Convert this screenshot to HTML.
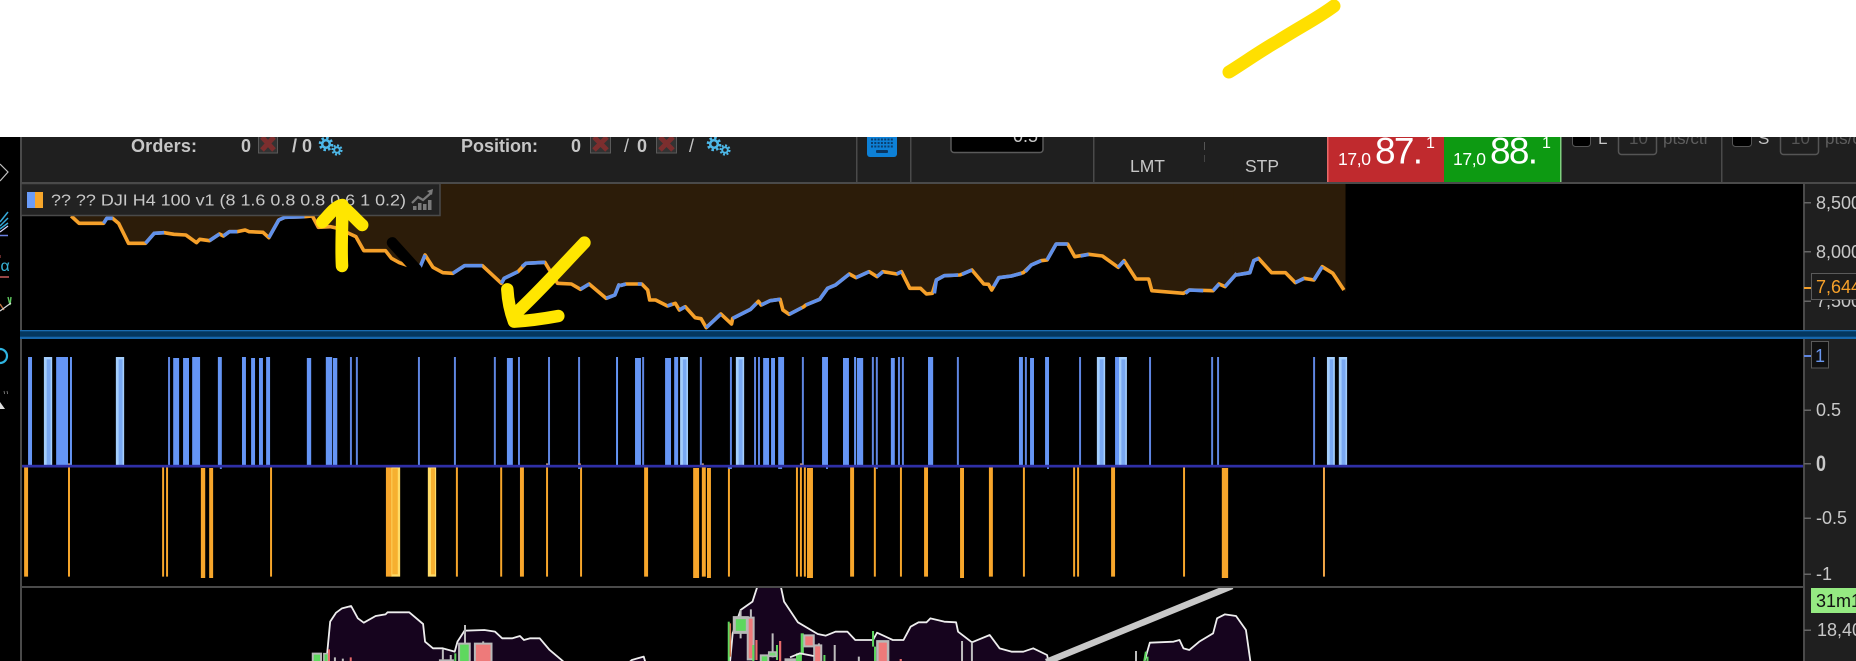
<!DOCTYPE html>
<html><head><meta charset="utf-8"><title>Chart</title>
<style>
html,body{margin:0;padding:0;background:#fff;width:1856px;height:661px;overflow:hidden}
svg{display:block;position:absolute;left:0;top:0}
text{font-family:"Liberation Sans",Arial,sans-serif}
.ns *{vector-effect:non-scaling-stroke}
</style></head><body>
<svg width="1856" height="661" viewBox="0 0 1856 661" xmlns="http://www.w3.org/2000/svg">
<defs>
<clipPath id="top"><rect x="0" y="137" width="1856" height="524"/></clipPath>
<clipPath id="pane"><rect x="21" y="588" width="1782" height="73"/></clipPath>
<clipPath id="pane1"><rect x="21" y="184" width="1782" height="146"/></clipPath>
</defs>
<rect width="1856" height="661" fill="#fff"/>
<rect y="137" width="1856" height="524" fill="#000"/>
<!-- header -->
<rect x="20" y="137" width="1836" height="45" fill="#1f1f1f"/>
<rect x="20" y="137" width="2" height="524" fill="#4a4a4a"/>
<rect x="20" y="182" width="1836" height="2" fill="#4a4a4a"/>
<rect x="856" y="137" width="1.5" height="45" fill="#4a4a4a"/>
<rect x="910" y="137" width="1.5" height="45" fill="#4a4a4a"/>
<rect x="1093" y="137" width="1.5" height="45" fill="#4a4a4a"/>
<rect x="1721" y="137" width="1.5" height="45" fill="#4a4a4a"/>
<rect x="1204" y="142" width="1" height="8" fill="#555"/><rect x="1204" y="155" width="1" height="7" fill="#444"/>

<g clip-path="url(#top)">
<text x="131" y="152" font-size="18" font-weight="bold" fill="#c6c6c6" textLength="66">Orders:</text>
<text x="241" y="152" font-size="18" font-weight="bold" fill="#c6c6c6">0</text>
<rect x="258.500" y="134" width="19" height="19" fill="#333" stroke="#5a5a5a"/>
<path d="M262 137l12 13M274 137l-12 13" stroke="#7c2e2e" stroke-width="5"/>
<text x="292" y="152" font-size="18" font-weight="bold" fill="#c6c6c6">/ 0</text>
<g fill="none" stroke="#4db8e8">
<circle cx="326" cy="144" r="3.800" stroke-width="2.500"/><circle cx="326" cy="144" r="6" stroke-width="2.600" stroke-dasharray="2.500 2.200"/>
<circle cx="337" cy="150" r="2.800" stroke-width="2"/><circle cx="337" cy="150" r="4.600" stroke-width="2" stroke-dasharray="2 1.600"/>
</g>
<text x="461" y="152" font-size="18" font-weight="bold" fill="#c6c6c6" textLength="77">Position:</text>
<text x="571" y="152" font-size="18" font-weight="bold" fill="#c6c6c6">0</text>
<rect x="590.500" y="134" width="20" height="19" fill="#333" stroke="#5a5a5a"/>
<path d="M594 137l13 13M607 137l-13 13" stroke="#7c2e2e" stroke-width="5"/>
<text x="624" y="152" font-size="18" fill="#c6c6c6">/</text>
<text x="637" y="152" font-size="18" font-weight="bold" fill="#c6c6c6">0</text>
<rect x="656.500" y="134" width="20" height="19" fill="#333" stroke="#5a5a5a"/>
<path d="M660 137l13 13M673 137l-13 13" stroke="#7c2e2e" stroke-width="5"/>
<text x="689" y="152" font-size="18" fill="#c6c6c6">/</text>
<g fill="none" stroke="#4db8e8">
<circle cx="714" cy="144" r="3.800" stroke-width="2.500"/><circle cx="714" cy="144" r="6" stroke-width="2.600" stroke-dasharray="2.500 2.200"/>
<circle cx="725" cy="150" r="2.800" stroke-width="2"/><circle cx="725" cy="150" r="4.600" stroke-width="2" stroke-dasharray="2 1.600"/>
</g>
<!-- keyboard -->
<rect x="867" y="130" width="30" height="27" rx="3" fill="#0d80d6"/>
<path d="M871 139.500h22M871 143h22M871 146.500h22" stroke="#0a3f70" stroke-width="2" stroke-dasharray="2 1.300"/>
<rect x="876" y="150" width="12" height="3" rx="1" fill="#0a3560"/>
<!-- input -->
<rect x="951" y="120" width="92" height="32.500" rx="3" fill="#000" stroke="#5a5a5a" stroke-width="1.500"/>
<text x="1013" y="142" font-size="18" fill="#c8c8c8">0.5</text>
<text x="1130" y="172" font-size="17.500" fill="#c6c6c6">LMT</text>
<text x="1245" y="172" font-size="17.500" fill="#c6c6c6">STP</text>
<!-- bid/ask -->
<rect x="1327" y="137" width="117" height="45" fill="#c02a2e"/>
<rect x="1327" y="137" width="1.500" height="45" fill="#e86a6a"/>
<rect x="1444" y="137" width="117" height="45" fill="#0d9a12"/>
<rect x="1560" y="137" width="1.500" height="45" fill="#7ed07e"/>
<text x="1338" y="165" font-size="17.500" fill="#fff" textLength="33">17,0</text>
<text x="1375" y="163.500" font-size="37" fill="#fff" textLength="48">87.</text>
<text x="1426" y="148" font-size="16" fill="#fff">1</text>
<text x="1453" y="165" font-size="17.500" fill="#fff" textLength="33">17,0</text>
<text x="1490" y="163.500" font-size="37" fill="#fff" textLength="48">88.</text>
<text x="1542" y="148" font-size="16" fill="#fff">1</text>
<!-- checks -->
<rect x="1572.500" y="128" width="18" height="18.500" rx="3" fill="#000" stroke="#555"/>
<text x="1598" y="144" font-size="17" fill="#c6c6c6">L</text>
<rect x="1618.500" y="125" width="38" height="29.500" rx="3" fill="none" stroke="#555" stroke-width="1.500"/>
<text x="1629" y="144" font-size="17" fill="#555">10</text>
<text x="1663" y="144" font-size="17" fill="#5e5e5e">pts/ctr</text>
<rect x="1732.500" y="128" width="19" height="18.500" rx="3" fill="#000" stroke="#555"/>
<text x="1758" y="144" font-size="17" fill="#c6c6c6">S</text>
<rect x="1780.500" y="125" width="38" height="29.500" rx="3" fill="none" stroke="#555" stroke-width="1.500"/>
<text x="1791" y="144" font-size="17" fill="#555">10</text>
<text x="1825" y="144" font-size="17" fill="#5e5e5e">pts/ctr</text>
</g>

<!-- price chart area -->
<g clip-path="url(#pane1)">
<g transform="translate(0,130) scale(.39541,.33333)">
<path fill="#2c1c09" d="M180 258L200 280H262L270 265H285L300 280L325 340H368L390 310L415 308L440 313L470 315L497 338L505 328L530 332L555 312L565 318L580 305H600L620 300L630 305L665 307L680 323L705 270L720 262L770 260L790 258L805 292L835 290L855 295L900 320L920 362H975L990 385L1010 398L1060 418L1075 375L1095 412L1120 428L1145 430L1175 407H1220L1268 460L1275 445L1310 425L1330 400L1378 397L1410 460L1445 462L1468 478L1490 462L1533 505L1555 495L1565 465L1568 467L1575 467V162H180Z"/>
</g>
<g transform="translate(620,130) scale(.39541,.33333)">
<path fill="#2c1c09" d="M0 467L15 462H55L70 480L75 510H90L120 528L140 520L150 540L165 530L190 563L205 566L218 593L255 552L282 582L285 565L330 538L350 514L357 525L380 512L405 508L412 540L428 553L465 530L470 525L505 508L525 475L545 465L580 432L597 443L630 425L650 440L665 425L700 432L712 425L733 475H760L775 492L790 490L800 450L820 437L860 435L890 420L920 462L932 463L940 480L958 443L990 438L1020 428L1040 405L1065 392L1080 390L1103 342H1132L1150 380L1185 373L1220 378L1260 412L1275 392L1305 447H1337L1345 482L1425 490L1440 480L1500 482L1515 462L1530 470L1560 430L1565 430V162H0Z"/>
</g>
<g transform="translate(1236,130) scale(.39541,.33333)">
<path fill="#2c1c09" d="M-6 436L0 435L35 428L45 392L57 385L90 428H125L150 458L172 445L197 450L218 410L245 430L277 486V162H-6Z"/>
</g>
<g class="ns" fill="none" stroke-width="3.600" stroke-linejoin="round" stroke-linecap="butt">
<g transform="translate(0,130) scale(.39541,.33333)">
<path stroke="#f5a02a" d="M180 258L200 280H262L270 265H285L300 280L325 340H368L390 310L415 308L440 313L470 315L497 338L505 328L530 332L555 312L565 318L580 305H600L620 300L630 305L665 307L680 323L705 270L720 262L770 260L790 258L805 292L835 290L855 295L900 320L920 362H975L990 385L1010 398L1060 418L1075 375L1095 412L1120 428L1145 430L1175 407H1220L1268 460L1275 445L1310 425L1330 400L1378 397L1410 460L1445 462L1468 478L1490 462L1533 505L1555 495L1565 465L1568 467"/>
<path stroke="#6090ea" d="M262 280L270 265H285M368 340L390 310L415 308M530 332L555 312M565 318L580 305H600M680 323L705 270L720 262L770 260M1060 418L1075 375M1145 430L1175 407H1220M1268 460L1275 445L1310 425M1320 410L1330 400L1378 397M1468 478L1490 462M1533 505L1555 495L1565 465L1568 467"/>
<path stroke="#000" stroke-width="11" stroke-linecap="round" d="M992 338L1053 418"/>
</g>
<g transform="translate(620,130) scale(.39541,.33333)">
<path stroke="#f5a02a" d="M0 467L15 462H55L70 480L75 510H90L120 528L140 520L150 540L165 530L190 563L205 566L218 593L255 552L282 582L285 565L330 538L350 514L357 525L380 512L405 508L412 540L428 553L465 530L470 525L505 508L525 475L545 465L580 432L597 443L630 425L650 440L665 425L700 432L712 425L733 475H760L775 492L790 490L800 450L820 437L860 435L890 420L920 462L932 463L940 480L958 443L990 438L1020 428L1040 405L1065 392L1080 390L1103 342H1132L1150 380L1185 373L1220 378L1260 412L1275 392L1305 447H1337L1345 482L1425 490L1440 480L1500 482L1515 462L1530 470L1560 430"/>
<path stroke="#6090ea" d="M0 467L15 462M45 462H55M120 528L132 522M150 540L165 530M218 593L255 552M285 565L330 538L345 520M357 525L380 512L405 508M428 553L460 533M470 525L505 508L525 475L545 465L580 432M597 443L630 425M650 440L665 425M700 432L712 425M795 490L800 450L820 437L855 435M865 433L890 420M945 470L958 443L990 438L1015 430M1025 425L1040 405L1065 392M1080 390L1103 342H1132M1165 378L1185 373M1260 412L1275 392M1430 490L1440 480L1475 482M1500 482L1515 462M1530 470L1560 430"/>
</g>
<g transform="translate(1236,130) scale(.39541,.33333)">
<path stroke="#f5a02a" d="M0 435L35 428L45 392L57 385L90 428H125L150 458L172 445L197 450L218 410L245 430L273 480"/>
<path stroke="#6090ea" d="M0 435L35 428L45 392L57 385M150 458L172 445M197 450L218 410"/>
</g>
</g>
</g>

<!-- legend -->
<rect x="21" y="183.500" width="419" height="32" fill="#222" stroke="#4a4a4a" stroke-width="1.500"/>
<rect x="27" y="192" width="8" height="16" fill="#6a9cf8"/>
<rect x="35" y="192" width="8" height="16" fill="#f7a62b"/>
<text x="51" y="205.500" font-size="16" fill="#c8c8c8" textLength="355" lengthAdjust="spacingAndGlyphs">?? ?? DJI H4 100 v1 (8 1.6 0.8 0.8 0.6 1 0.2)</text>
<g stroke="#7a7a7a" stroke-width="2.200" fill="none"><path d="M412 203l6-6 5 3 8-7"/></g>
<path d="M427 191l6-2-1 6z" fill="#7a7a7a"/>
<path d="M413 210v-4h3.500v4zM418 210v-7h3.500v7zM423 210v-6h3.500v6zM428 210v-10h3.500v10z" fill="#7a7a7a"/>

<!-- histogram -->
<g transform="translate(0,340) scale(.39541,.33333)">
<path fill="#6595f5" d="M71 51h10v324h-10zM142 51h30v324h-30zM177 51h5v324h-5zM438 54h15v321h-15zM463 54h15v321h-15zM486 51h20v324h-20zM551 51h10v324h-10zM612 51h10v324h-10zM635 54h10v321h-10zM655 54h10v321h-10zM673 51h10v324h-10zM776 54h11v321h-11zM824 51h16v324h-16zM842 54h11v321h-11zM1282 54h15v321h-15zM1558 51h5v324h-5z"/>
<path fill="#5f86e2" d="M425 51h5v324h-5zM885 51h5v324h-5zM900 51h5v324h-5zM1057 51h5v324h-5zM1148 51h5v324h-5zM1249 51h5v324h-5zM1310 51h5v324h-5zM1386 51h5v324h-5zM1462 51h5v324h-5z"/>
<path fill="#a4cefc" d="M111 51h21v324h-21zM293 51h21v324h-21z"/>
<path fill="#79a8f2" d="M118 58h10v317h-10zM300 58h10v317h-10z"/>
<path fill="#f7a62b" d="M61 380h10v330h-10zM172 380h5v330h-5zM410 380h5v330h-5zM420 380h5v330h-5zM508 384h11v330h-11zM529 384h10v330h-10zM683 380h5v330h-5zM976 380h16v330h-16zM1153 380h5v330h-5zM1265 380h5v330h-5zM1315 380h10v330h-10zM1381 380h5v330h-5zM1467 380h5v330h-5z"/>
<path fill="#ffdc68" d="M990 380h22v330h-22zM1082 380h21v330h-21z"/>
<path fill="#f6b030" d="M992 385h14v318h-14zM1090 385h10v318h-10z"/>
<path fill="#c79a80" d="M172 370h5v5h-5zM1381 370h5v5h-5zM1462 370h7v5h-7z"/>
<path fill="#5f86e2" d="M556 382h5v5h-5zM1462 382h7v5h-7z"/>
</g>
<g transform="translate(620,340) scale(.39541,.33333)">
<path fill="#6595f5" d="M38 54h15v321h-15zM114 54h15v321h-15zM137 51h10v324h-10zM362 54h15v321h-15zM382 54h10v321h-10zM400 51h15v324h-15zM511 51h15v324h-15zM564 54h15v321h-15zM592 51h5v324h-5zM599 54h16v321h-16zM685 54h10v321h-10zM779 51h13v324h-13zM1009 51h10v324h-10zM1037 54h10v321h-10zM1075 51h10v324h-10zM1252 51h10v324h-10z"/>
<path fill="#5f86e2" d="M56 51h5v324h-5zM202 51h5v324h-5zM278 51h5v324h-5zM339 51h5v324h-5zM349 51h5v324h-5zM460 51h5v324h-5zM637 51h5v324h-5zM647 51h5v324h-5zM703 51h5v324h-5zM713 51h5v324h-5zM852 51h5v324h-5zM1024 51h5v324h-5zM1161 51h5v324h-5zM1338 51h5v324h-5zM1495 51h5v324h-5zM1510 51h5v324h-5z"/>
<path fill="#a4cefc" d="M152 51h20v324h-20zM293 51h21v324h-21zM1206 51h21v324h-21zM1262 51h20v324h-20z"/>
<path fill="#79a8f2" d="M159 58h9v317h-9zM300 58h10v317h-10zM1213 58h10v317h-10zM1268 58h10v317h-10z"/>
<path fill="#f7a62b" d="M61 380h10v330h-10zM185 384h15v330h-15zM207 380h10v330h-10zM220 384h10v330h-10zM273 380h5v330h-5zM445 380h5v330h-5zM455 380h5v330h-5zM465 380h5v330h-5zM473 384h15v330h-15zM582 380h10v330h-10zM642 380h5v330h-5zM708 380h5v330h-5zM769 380h10v330h-10zM860 384h10v330h-10zM933 380h10v330h-10zM1019 380h5v330h-5zM1146 380h5v330h-5zM1156 380h5v330h-5zM1242 380h10v330h-10zM1424 380h5v330h-5zM1522 384h16v330h-16z"/>
<path fill="#c79a80" d="M207 370h5v5h-5zM455 370h7v5h-7z"/>
<path fill="#5f86e2" d="M273 382h10v5h-10zM400 382h10v5h-10zM521 382h5v5h-5zM647 382h5v5h-5zM1080 382h5v5h-5z"/>
</g>
<g transform="translate(1236,340) scale(.39541,.33333)">
<path fill="#5f86e2" d="M195 51h5v324h-5z"/>
<path fill="#a4cefc" d="M230 51h20v324h-20zM260 51h21v324h-21z"/>
<path fill="#79a8f2" d="M237 58h9v317h-9zM267 58h10v317h-10z"/>
<path fill="#f2a646" d="M220 380h5v330h-5z"/>
</g>
<rect x="22" y="464.800" width="1781" height="2.700" fill="#2f2fa6"/>

<!-- lower pane -->
<rect x="20" y="586" width="1783" height="2" fill="#4a4a4a"/>
<g clip-path="url(#pane)">
<g class="ns" transform="translate(0,570) scale(.39541,.33333)">
<path fill="#16041e" stroke="#eee" stroke-width="1.800" stroke-linejoin="round" d="M825 280L835 155L850 128L865 115L888 108L905 145L920 158L950 138L975 133L980 127H1035L1070 162L1075 215L1095 235H1120L1150 245L1157 215L1175 182L1225 180L1252 185L1270 205H1295L1315 198L1325 210L1340 205H1365L1390 240L1420 270L1430 280"/>
<g fill="none" stroke="#bdbdbd" stroke-width="2">
<path d="M1120 238V268M1140 255V270M847 262V280M867 266V280M1176 165V220M1222 214V220"/>
</g>
<rect x="791" y="251" width="21" height="30" fill="#5ed85e" stroke="#b8b8b8" stroke-width="2"/>
<rect x="819" y="251" width="11" height="30" fill="#5ed85e" stroke="#b8b8b8" stroke-width="1.500"/>
<path d="M832 238V280M887 262V280" stroke="#e86a6a" stroke-width="2"/>
<rect x="1110" y="268" width="38" height="12" fill="#b8b8b8"/>
<rect x="1149" y="250" width="5" height="30" fill="#5ed85e"/>
<rect x="1161" y="221" width="27" height="60" fill="#5ed85e" stroke="#b8b8b8" stroke-width="2"/>
<rect x="1201" y="221" width="42" height="60" fill="#ee7a7a" stroke="#b8b8b8" stroke-width="2"/>
</g>
<g class="ns" transform="translate(620,570) scale(.39541,.33333)">
<path fill="#16041e" stroke="#eee" stroke-width="1.800" stroke-linejoin="round" d="M30 270L60 260L65 280H20Z"/>
<path fill="#16041e" stroke="#eee" stroke-width="1.800" stroke-linejoin="round" d="M278 280L285 190L305 120L335 95L350 40H405L415 95L450 157L500 192L520 197L545 185H575L595 210H640L650 188L690 210H717L735 170L755 157H775L785 145L820 155L850 157L855 185L890 217L935 195L960 235L990 245H1020L1045 235L1080 255L1085 280"/>
<path fill="#16041e" stroke="#eee" stroke-width="1.800" stroke-linejoin="round" d="M1325 280L1340 218L1400 215L1415 210L1425 235L1440 240L1465 215L1500 190L1510 145L1530 133L1558 138L1583 180L1595 280Z"/>
<path d="M1078 276L1548 48" stroke="#c8c8c8" stroke-width="6.500" fill="none"/>
<path d="M275 155V280" stroke="#5ed85e" stroke-width="2"/>
<path d="M279 160V260" stroke="#d87a50" stroke-width="1.500"/>
<path d="M305 120V205M331 118V143M386 190V262M543 225V280M604 260V280M865 213V280M890 217V280M1305 243V280M503 220V228" stroke="#bdbdbd" stroke-width="2" fill="none"/>
<rect x="289" y="143" width="33" height="44" fill="#5ed85e" stroke="#b8b8b8" stroke-width="3"/>
<rect x="323" y="143" width="15" height="125" fill="#ee7a7a" stroke="#b8b8b8" stroke-width="2"/>
<path d="M345 210V270M405 213V280M710 267V280" stroke="#e86a6a" stroke-width="2.200"/>
<path d="M337 225V280M397 225V270M517 255V280M640 183V230M645 230V280" stroke="#5ed85e" stroke-width="2"/>
<rect x="356" y="256" width="19" height="24" fill="#5ed85e" stroke="#b8b8b8" stroke-width="2"/>
<rect x="376" y="246" width="19" height="13" fill="#7ad87a" stroke="#b8b8b8" stroke-width="1.500"/>
<rect x="416" y="265" width="29" height="15" fill="#b8b8b8"/>
<rect x="445" y="250" width="15" height="30" fill="#5ed85e"/>
<rect x="457" y="190" width="8" height="60" fill="#5ed85e"/>
<rect x="466" y="196" width="24" height="33" fill="#ee7a7a" stroke="#b8b8b8" stroke-width="2"/>
<rect x="491" y="226" width="18" height="54" fill="#ee7a7a" stroke="#b8b8b8" stroke-width="2"/>
<rect x="651" y="214" width="27" height="66" fill="#ee7a7a" stroke="#b8b8b8" stroke-width="2.500"/>
<path d="M430 262L455 250L490 258" stroke="#eee" stroke-width="1.800" fill="none"/>
<path d="M1325 280L1330 245M1334 260V280" stroke="#5ed85e" stroke-width="2"/>
</g>
</g>

<!-- axis -->
<rect x="1803" y="184" width="53" height="477" fill="#1f1f1f"/>
<rect x="1803" y="184" width="2" height="477" fill="#4a4a4a"/>
<g fill="#c8c8c8" font-size="18">
<rect x="1804" y="202" width="7" height="1.500" fill="#666"/><text x="1816" y="209">8,500</text>
<rect x="1804" y="251" width="7" height="1.500" fill="#666"/><text x="1816" y="258">8,000</text>
<rect x="1804" y="300.500" width="7" height="1.500" fill="#666"/><text x="1816" y="307">7,500</text>
</g>
<rect x="1811.500" y="273.500" width="50" height="26" fill="#1c1c1c" stroke="#5a5a5a"/>
<rect x="1804" y="287" width="7" height="2" fill="#f5a02a"/>
<text x="1816" y="293" font-size="18" fill="#f5a02a">7,644</text>

<!-- band -->
<rect x="20" y="330" width="1836" height="9" fill="#04375f"/>
<rect x="20" y="330" width="1836" height="1.300" fill="#1a6cb0"/>
<rect x="20" y="336.700" width="1836" height="2.300" fill="#1666ab"/>

<!-- second axis -->
<rect x="1811.500" y="341.500" width="17" height="26.500" fill="#101010" stroke="#5a5a5a"/>
<rect x="1804" y="355" width="7" height="2" fill="#5f86e2"/>
<text x="1815" y="362" font-size="18" fill="#6a96ee">1</text>
<g fill="#c8c8c8" font-size="18">
<rect x="1804" y="409.500" width="7" height="1.500" fill="#666"/><text x="1816" y="416">0.5</text>
<rect x="1804" y="463" width="7" height="1.500" fill="#666"/><text x="1816" y="471" font-size="22" font-weight="bold" textLength="10" lengthAdjust="spacingAndGlyphs">0</text>
<rect x="1804" y="517.500" width="7" height="1.500" fill="#666"/><text x="1816" y="524">-0.5</text>
<rect x="1804" y="573.500" width="7" height="1.500" fill="#666"/><text x="1816" y="580">-1</text>
</g>
<rect x="1805" y="586" width="51" height="2" fill="#1f1f1f"/>
<rect x="1811" y="588" width="45" height="25" fill="#95ea82"/>
<text x="1816" y="607" font-size="18" fill="#111">31m1</text>
<rect x="1804" y="629.500" width="7" height="1.500" fill="#666"/>
<text x="1817" y="636" font-size="18" fill="#c8c8c8">18,400</text>

<!-- left sidebar -->
<g fill="none">
<path d="M0 164l8 8-8 9" stroke="#c0c0c0" stroke-width="1.200"/>
<path d="M0 222L8 212M0 226L8 218M0 229L8 223" stroke="#35a8d8" stroke-width="1.500"/>
<path d="M0 232L8 226" stroke="#d8d8ff" stroke-width="1.200"/>
<path d="M0 235.500H8" stroke="#6a7fe0" stroke-width="1.500"/>
<path d="M0 255V258" stroke="#c05050" stroke-width="1"/>
<path d="M0 277H9" stroke="#c85a5a" stroke-width="1.500"/>
<path d="M8 297l2 8 1-8" stroke="#5fc85f" stroke-width="1.400"/>
<path d="M0 304l4 6" stroke="#c07040" stroke-width="1.400"/>
<path d="M0 311L11 303" stroke="#d8d8d8" stroke-width="1.200"/>
<circle cx="0" cy="356" r="7" stroke="#2fb4e0" stroke-width="2.200"/>
<path d="M4 391l.6 3M7 391l.6 3" stroke="#888" stroke-width=".8"/>
</g>
<text x="0.500" y="271" font-size="16" fill="#38b4d8">α</text>
<path d="M0 402L5 409H0Z" fill="#ddd"/>

<!-- yellow pen -->
<g class="ns" fill="none" stroke-linecap="round" stroke-linejoin="round">
<path d="M1229 72C1245 62 1262 50 1278 41C1300 27 1318 18 1334 6" stroke="#ffdf00" stroke-width="13"/>
<g transform="translate(0,130) scale(.39541,.33333)" stroke="#ffe600" stroke-width="12.500">
<path d="M865 408C862 350 866 280 866 225"/>
<path d="M815 276C830 258 845 232 862 226C880 240 900 268 916 285"/>
<path d="M1478 338C1420 410 1360 490 1300 555"/>
<path d="M1283 478C1285 520 1292 550 1300 575C1340 572 1380 565 1412 558"/>
</g>
</g>
</svg>
</body></html>
